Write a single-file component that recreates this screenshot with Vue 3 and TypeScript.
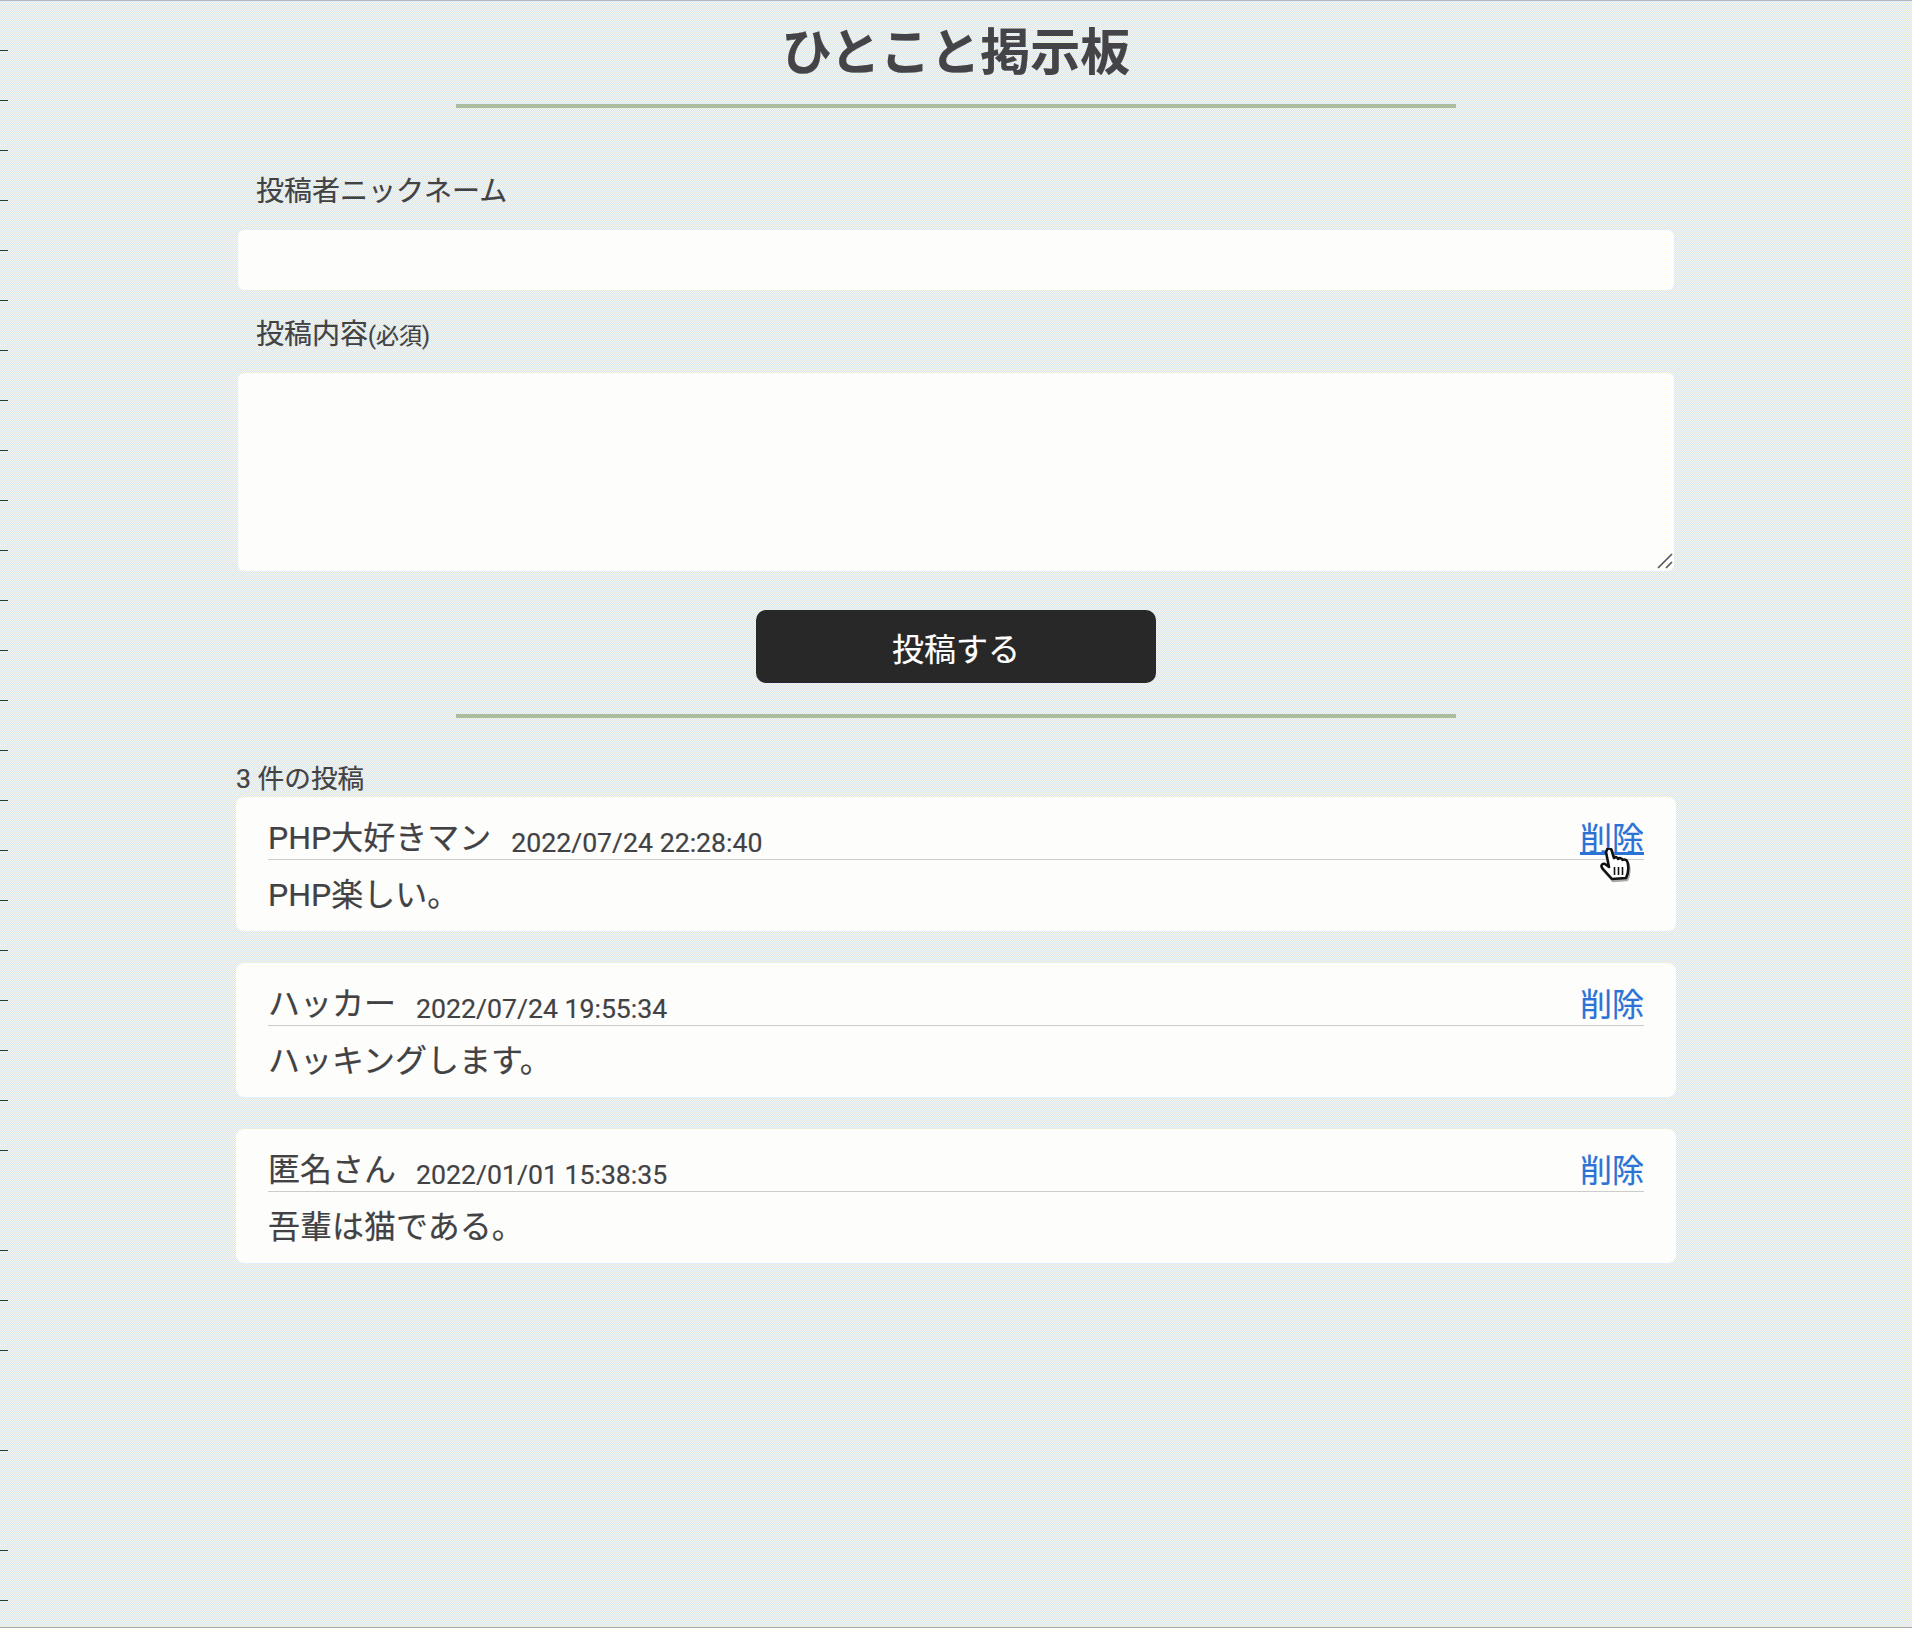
<script setup lang="ts">
interface Post { name: string; date: string; body: string }
const posts: Post[] = [
  { name: 'PHP大好きマン', date: '2022/07/24 22:28:40', body: 'PHP楽しい。' },
  { name: 'ハッカー', date: '2022/07/24 19:55:34', body: 'ハッキングします。' },
  { name: '匿名さん', date: '2022/01/01 15:38:35', body: '吾輩は猫である。' },
]
const skipped = [1200, 1400, 1500]
const ticks: number[] = []
for (let y = 50; y <= 1600; y += 50) if (!skipped.includes(y)) ticks.push(y)
</script>

<template>
  <div class="page">
    <i v-for="t in ticks" :key="t" class="tick" :style="{ top: t + 'px' }"></i>
    <h1 class="title">ひとこと掲示板</h1>
    <hr class="rule" />
    <main class="wrap">
      <form class="form" @submit.prevent>
        <label class="label first" for="nick">投稿者ニックネーム</label>
        <input id="nick" class="field input" type="text" />
        <label class="label second" for="body">投稿内容<small>(必須)</small></label>
        <div class="area-box">
          <textarea id="body" class="field area"></textarea>
          <svg class="grip" viewBox="0 0 16 16" width="16" height="16" aria-hidden="true">
            <path d="M1 15L15 1M9 15L15 9" stroke="#55555c" stroke-width="1.6" fill="none" />
          </svg>
        </div>
        <button class="submit" type="submit">投稿する</button>
      </form>
      <hr class="rule" />
      <p class="count">3 件の投稿</p>
      <article v-for="(p, i) in posts" :key="p.date" class="card">
        <header class="head">
          <span class="name">{{ p.name }}</span>
          <time class="date">{{ p.date }}</time>
          <a class="del" :class="{ hover: i === 0 }" href="#" @click.prevent>削除</a>
          <svg v-if="i === 0" class="cursor" viewBox="0 0 32 34" width="32" height="34" aria-hidden="true">
            <path d="M7 2C7 0 11 0 11.5 2L14 10C15.5 8.5 17.5 9 18 11C19.5 9.5 22 10 22.5 12C24 11 27 11.5 27.5 14C29 20 29 24 26 30L12 31L3 21C0 18 2 15 5 16L9 19L6 4Z" fill="#fff" stroke="#111" stroke-width="2.6" stroke-linejoin="round" />
            <path d="M14.5 19V27M18.5 19V27M22.5 19V27" stroke="#111" stroke-width="1.6" fill="none" />
          </svg>
        </header>
        <p class="text">{{ p.body }}</p>
      </article>
    </main>
  </div>
</template>

<style>
html, body { margin: 0; padding: 0; }
</style>

<style scoped>
.page {
  position: relative;
  box-sizing: border-box;
  height: 1628px;
  overflow: hidden;
  border-top: 1px solid #b4b8c2;
  border-bottom: 1px solid #a8a8a8;
  color: #424244;
  -webkit-text-stroke: 0.2px currentColor;
  font-family: Roboto, "Noto Sans CJK JP", sans-serif;
  background-color: #e8eeee;
  background-image: repeating-conic-gradient(#f6f7e6 0 25%, #d9e4f4 0 50%);
  background-size: 2px 2px;
}
.tick { position: absolute; left: 0; width: 8px; height: 1px; margin-top: -1px; background: #24402c; }
.title {
  margin: 0;
  height: 103px;
  line-height: 104px;
  text-align: center;
  font-size: 50px;
  font-weight: 700;
  color: #444448;
}
.rule { display: block; width: 1000px; height: 4px; margin: 0 auto; border: 0; background: #abbd9e; }
.wrap { width: 1440px; margin: 0 auto; }
.form { display: flex; flex-direction: column; padding: 0 2px; }
.label { padding-left: 18px; font-size: 28px; line-height: 40px; }
.label small { font-size: 23px; line-height: 1; }
.label.first { margin-top: 64px; margin-bottom: 18px; }
.label.second { margin-top: 25px; margin-bottom: 18px; }
.area-box { position: relative; }
.grip { position: absolute; right: 1px; bottom: 2px; }
.field {
  display: block;
  box-sizing: border-box;
  width: 100%;
  border: 0;
  border-radius: 6px;
  background: #fdfdfb;
  outline: none;
  font: inherit;
}
.input { height: 60px; }
.area { height: 198px; resize: none; }
.submit {
  align-self: center;
  width: 400px;
  height: 73px;
  margin: 39px 0 31px;
  border: 0;
  border-radius: 10px;
  background: #282828;
  color: #fff;
  font: 400 32px Roboto, "Noto Sans CJK JP", sans-serif;
}
.count { margin: 43px 0 0; padding-left: 0; font-size: 26.67px; line-height: 36px; height: 36px; }
.card {
  box-sizing: border-box;
  height: 134px;
  margin-bottom: 32px;
  padding: 0 32px;
  border-radius: 8px;
  background: #fdfdfb;
}
.head {
  position: relative;
  display: flex;
  align-items: flex-start;
  height: 63px;
  padding-top: 21px;
  box-sizing: border-box;
  border-bottom: 1px solid #ccc;
  line-height: 40px;
}
.name { font-size: 32px; }
.date { margin-left: 20px; font-size: 26.67px; line-height: 50px; }
.del { margin-left: auto; font-size: 32px; line-height: 42px; color: #2b72d6; text-decoration: none; }
.del.hover { text-decoration: underline; }
.cursor { position: absolute; right: 12px; top: 51px; filter: drop-shadow(1px 2px 0 #aaa); }
.text { margin: 0; padding-top: 13px; font-size: 32px; line-height: 44px; }
</style>
